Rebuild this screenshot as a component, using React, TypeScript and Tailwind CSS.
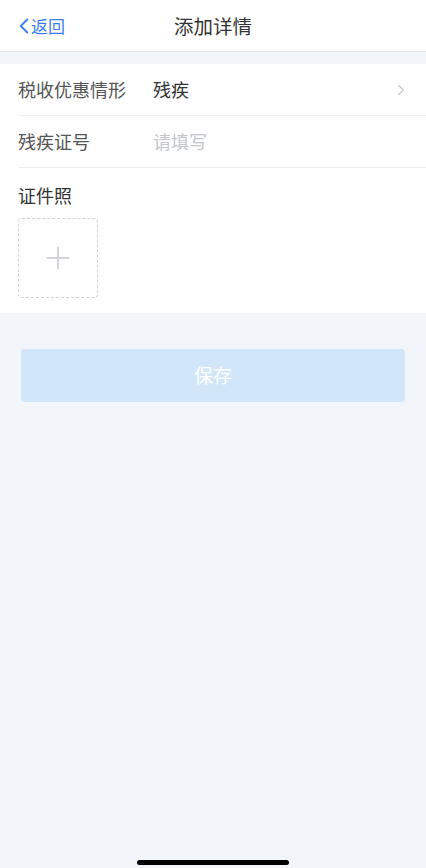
import { ChevronLeft, ChevronRight, Plus } from "lucide-react";

const font = { fontFamily: '"Noto Sans CJK SC", "Noto Sans", sans-serif' };

export default function App() {
  return (
    <div style={font} className="relative flex min-h-[868px] w-full flex-col bg-[#f2f5f9]">
      {/* header */}
      <header className="relative flex h-[52px] items-center justify-center border-b border-[#dfe3e8] bg-white">
        <button className="absolute left-[11px] top-0 flex h-full items-center text-[#3a7cf0]">
          <ChevronLeft className="h-[26px] w-[26px] -mr-[6px]" strokeWidth={1.7} />
          <span className="text-[17px]">返回</span>
        </button>
        <h1 className="text-[19.5px] text-[#333]">添加详情</h1>
      </header>

      {/* form */}
      <section className="mt-[12px] bg-white pl-[18px]">
        <div className="flex h-[52px] items-center border-b border-[#eceef1] pr-[16px]">
          <span className="w-[135px] text-[18px] text-[#555]">税收优惠情形</span>
          <span className="flex-1 text-[18px] text-[#333]">残疾</span>
          <ChevronRight className="h-[18px] w-[18px] text-[#c5c7cc]" strokeWidth={1.6} />
        </div>
        <div className="flex h-[52px] items-center border-b border-[#eceef1]">
          <span className="w-[135px] text-[18px] text-[#555]">残疾证号</span>
          <span className="text-[18px] text-[#c3c6cd]">请填写</span>
        </div>
        <div className="pb-[15px] pt-[14px]">
          <div className="text-[18px] leading-[26px] text-[#333]">证件照</div>
          <div className="mt-[10px] flex h-[80px] w-[80px] items-center justify-center rounded-[4px] border border-dashed border-[#cfd2d8]">
            <Plus className="h-[36px] w-[36px] text-[#d2d4da]" strokeWidth={1.3} />
          </div>
        </div>
      </section>

      {/* save */}
      <div className="px-[21px] pt-[36px]">
        <button className="flex h-[53px] w-full items-center justify-center rounded-[4px] bg-[#d2e6fa] text-[19px] text-white">
          保存
        </button>
      </div>

      {/* home indicator */}
      <div className="absolute bottom-[3px] left-1/2 h-[5px] w-[152px] -translate-x-1/2 rounded-full bg-black" />
    </div>
  );
}
